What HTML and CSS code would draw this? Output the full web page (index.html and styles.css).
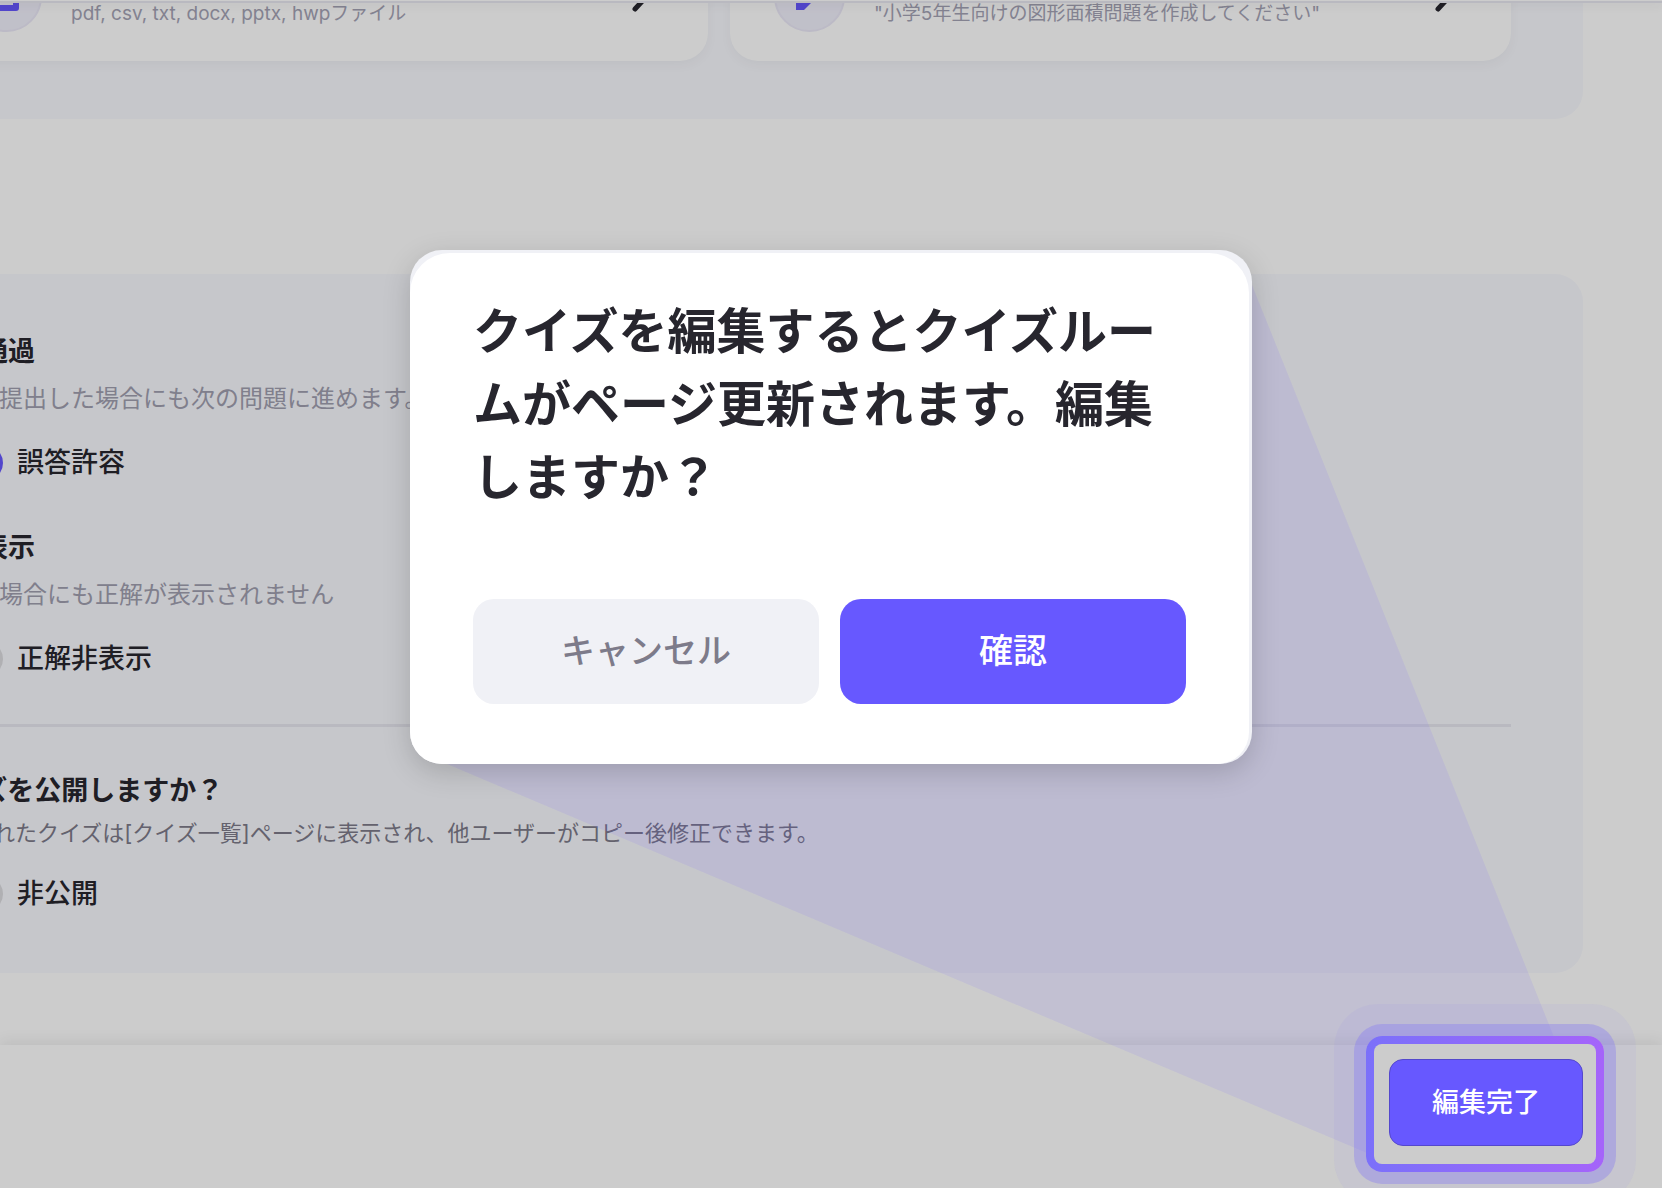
FILE: index.html
```html
<!DOCTYPE html>
<html lang="ja">
  <head>
    <meta charset="UTF-8" />
    <meta name="viewport" content="width=device-width, initial-scale=1.0" />
    <title>クイズ編集</title>
    <link rel="stylesheet" href="styles.css">
  </head>
  <body>
    <header class="topbar"></header>

    <main class="content">
      <section class="panel sources">
        <div class="card">
          <span class="card-icon">
            <svg width="34" height="34" viewBox="0 0 34 34" fill="none" stroke="#6758ff" stroke-width="6" stroke-linejoin="round">
              <path d="M7 5h12l7 8v16H7z" />
            </svg>
          </span>
          <p class="card-text">pdf, csv, txt, docx, pptx, hwpファイル</p>
          <svg class="chevron" width="20" height="32" viewBox="0 0 20 32" fill="none">
            <path d="M4 3l12 13L4 29" />
          </svg>
        </div>
        <div class="card">
          <span class="card-icon">
            <svg width="34" height="34" viewBox="0 0 34 34" fill="#6758ff">
              <path d="M3 31V22L21 3l10 8-20 20z" />
            </svg>
          </span>
          <p class="card-text">"小学5年生向けの図形面積問題を作成してください"</p>
          <svg class="chevron" width="20" height="32" viewBox="0 0 20 32" fill="none">
            <path d="M4 3l12 13L4 29" />
          </svg>
        </div>
      </section>

      <section class="panel settings">
        <div class="setting">
          <h3>誤答通過</h3>
          <p>誤答を提出した場合にも次の問題に進めます。</p>
          <div class="option">
            <input type="radio" name="pass" id="pass_allow" checked />
            <label for="pass_allow">誤答許容</label>
          </div>
        </div>
        <div class="setting">
          <h3>正解表示</h3>
          <p>誤答の場合にも正解が表示されません</p>
          <div class="option">
            <input type="radio" name="answer" id="answer_hidden" />
            <label for="answer_hidden">正解非表示</label>
          </div>
        </div>
        <hr />
        <div class="setting publish">
          <h3>クイズを公開しますか？</h3>
          <p>公開されたクイズは[クイズ一覧]ページに表示され、他ユーザーがコピー後修正できます。</p>
          <div class="option">
            <input type="radio" name="publish" id="publish_private" />
            <label for="publish_private">非公開</label>
          </div>
        </div>
      </section>
    </main>

    <footer class="bottombar">
      <div class="spotlight">
        <div class="ring"></div>
        <button type="button" class="done">編集完了</button>
      </div>
    </footer>

    <div class="dim"></div>
    <svg class="beam" viewBox="0 0 1662 1188" preserveAspectRatio="none">
      <polygon points="447,764 1252,285 1554,1037 1367,1153" />
    </svg>

    <div class="overlay">
      <div class="modal" role="dialog" aria-modal="true" aria-labelledby="modal_title">
        <div class="modal-body">
          <h2 id="modal_title">クイズを編集するとクイズルームがページ更新されます。編集しますか？</h2>
          <div class="actions">
            <button type="button" class="cancel">キャンセル</button>
            <button type="button" class="confirm">確認</button>
          </div>
        </div>
      </div>
    </div>
  </body>
</html>
```

FILE: styles.css
```css
*,
*:before,
*:after {
  box-sizing: border-box;
}

h2,
h3,
p {
  margin: 0;
}

body {
  margin: 0;
  height: 100vh;
  overflow: hidden;
  display: flex;
  flex-direction: column;
  background: #fff;
  color: #27262e;
  font-family: Inter, "Noto Sans CJK JP", sans-serif;
}

button {
  border: none;
  cursor: pointer;
  font-family: inherit;
}

.topbar {
  position: relative;
  flex: none;
  height: 3px;
  border-bottom: 2px solid #e8e8f1;
  box-shadow: 0 2px 10px rgba(0, 0, 0, 0.1);
  z-index: 1;
}

.content {
  flex: 1;
  min-height: 0;
  overflow: hidden;
}

/* panels run past the left edge of the window */
.panel {
  margin: 0 79px 0 -145px;
  background: #f8f9fe;
  border-radius: 28px;
}

.sources {
  display: grid;
  grid-template-columns: 1fr 1fr;
  gap: 22px;
  margin-top: -72px;
  padding: 0 72px 58px;
}

.card {
  display: flex;
  align-items: center;
  gap: 29px;
  height: 130px;
  padding: 0 57px 0 44px;
  background: #fff;
  border-radius: 28px;
  box-shadow: 0 4px 12px rgba(0, 0, 0, 0.04);

  .card-icon {
    flex: none;
    display: flex;
    align-items: center;
    justify-content: center;
    width: 71px;
    height: 71px;
    border: 2px solid #ebe9f8;
    border-radius: 50%;
    background: #f1f0fc;
  }

  .card-text {
    flex: 1;
    padding-top: 36px;
    color: #a4a3b5;
    font-size: 19px;
    line-height: 24px;
    white-space: nowrap;
  }

  .chevron {
    flex: none;
    stroke: #27262e;
    stroke-width: 5;
    stroke-linecap: round;
  }
}

.settings {
  display: flex;
  flex-direction: column;
  margin-top: 155px;
  padding: 58px 72px 59px;

  hr {
    width: 100%;
    height: 3px;
    margin: 0 0 44px;
    border: none;
    background: #e8e8f1;
  }
}

.setting {
  padding-bottom: 45px;

  h3 {
    font-size: 27px;
    line-height: 40px;
    font-weight: 700;
  }

  p {
    margin: 11px 0 28px;
    color: #a09fb0;
    font-size: 24px;
    line-height: 32px;
    white-space: nowrap;
  }
}

.publish {
  padding-bottom: 0;

  p {
    margin: 6px 0 25px;
    color: #7d7b8a;
    font-size: 22px;
  }
}

.option {
  display: flex;
  align-items: center;
  gap: 14px;
  padding-left: 40px;

  input {
    appearance: none;
    width: 36px;
    height: 36px;
    margin: 0;
    border: 4px solid #dcdce0;
    border-radius: 50%;
  }

  input:checked {
    border: 11px solid #6758ff;
  }

  label {
    font-size: 27px;
    line-height: 40px;
    font-weight: 500;
  }
}

.bottombar {
  position: relative;
  flex: none;
  display: flex;
  justify-content: flex-end;
  padding: 14px 79px 42px;
  background: #fff;
  box-shadow: 0 -3px 14px rgba(0, 0, 0, 0.08);
}

.dim {
  position: fixed;
  inset: 0;
  background: rgba(0, 0, 0, 0.2);
  z-index: 2;
}

.beam {
  position: fixed;
  inset: 0;
  width: 100%;
  height: 100%;
  fill: rgba(108, 90, 255, 0.11);
  z-index: 3;
}

.spotlight {
  position: relative;
  z-index: 4;
}

.ring {
  position: absolute;
  inset: -23px -21px -26px -23px;
  border: 8px solid transparent;
  border-radius: 16px;
  background:
    linear-gradient(#ccc, #ccc) padding-box,
    linear-gradient(90deg, #7b70fa, #a564fa) border-box;
  box-shadow:
    0 0 0 12px rgba(123, 108, 250, 0.32),
    0 0 0 32px rgba(123, 108, 250, 0.06);
}

.done {
  position: relative;
  padding: 24px 42px 23px;
  background: #6758ff;
  border: 1px solid #5448cc;
  border-radius: 14px;
  color: #fff;
  font-size: 27px;
  line-height: 38px;
  font-weight: 500;
}

.overlay {
  position: fixed;
  inset: 0;
  display: flex;
  align-items: center;
  justify-content: center;
  padding-bottom: 174px;
  z-index: 5;
}

.modal {
  width: 842px;
  max-width: 100%;
  padding: 3px 3px 0 0;
  background: #f0f1f6;
  border-radius: 32px;
  box-shadow: 0 8px 28px rgba(0, 0, 0, 0.17);
}

.modal-body {
  padding: 42px 63px 60px;
  background: #fff;
  border-radius: 40px 40px 32px 32px;

  h2 {
    font-size: 49px;
    line-height: 73px;
    font-weight: 700;
  }
}

.actions {
  display: grid;
  grid-template-columns: 1fr 1fr;
  gap: 21px;
  margin-top: 85px;

  button {
    height: 105px;
    padding: 0 0 6px;
    border-radius: 21px;
    font-size: 34px;
    font-weight: 500;
  }

  .cancel {
    background: #f0f1f6;
    color: #7d7b8a;
  }

  .confirm {
    background: #6758ff;
    color: #fff;
  }
}
```
